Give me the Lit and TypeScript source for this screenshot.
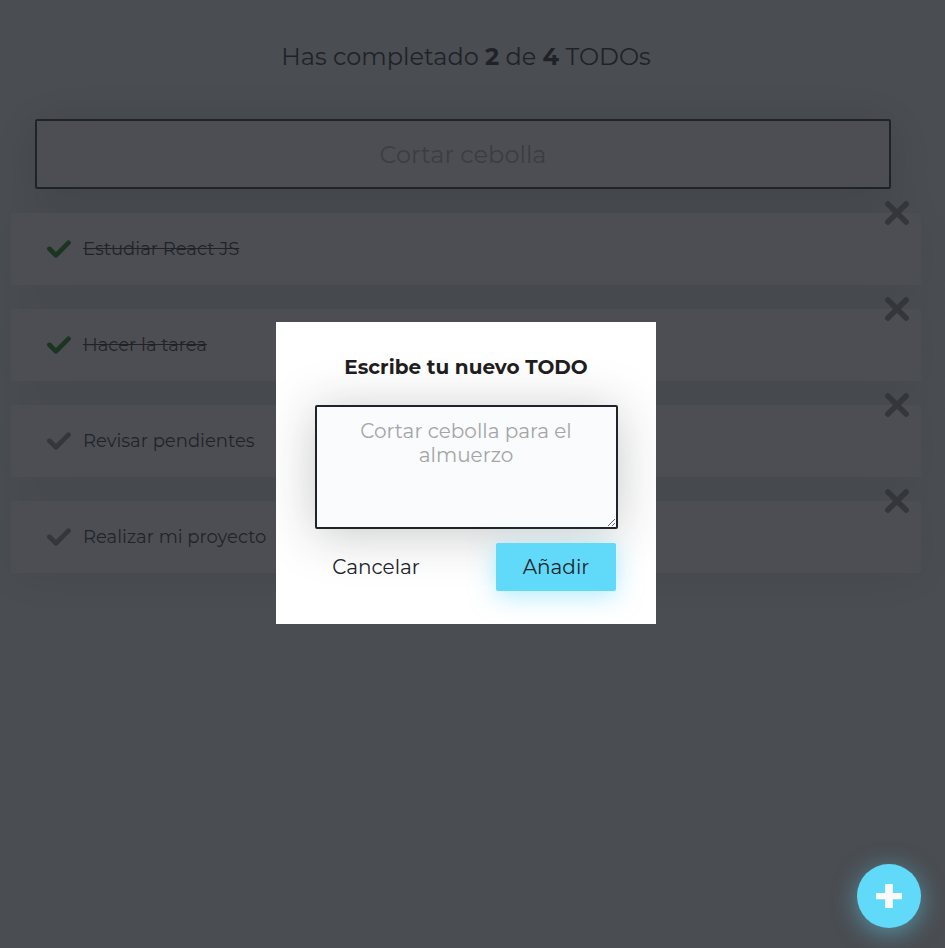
import { LitElement, html, css } from "lit";
import { customElement, property, state } from "lit/decorators.js";
import { classMap } from "lit/directives/class-map.js";

@customElement("todo-item")
class TodoItem extends LitElement {
  @property() text = "";
  @property({ type: Boolean }) completed = false;

  static styles = css`
    :host {
      display: flex;
      align-items: center;
      position: relative;
      box-sizing: border-box;
      height: 72px;
      padding-left: 36px;
      background: #fafafa;
      box-shadow: 0 5px 50px rgba(32, 35, 41, 0.15);
    }
    .check {
      width: 24px;
      height: 24px;
      fill: gray;
    }
    .check.done {
      fill: green;
    }
    .label {
      margin: 0 0 0 12px;
      font-size: 18px;
      line-height: 24px;
      color: #1e1e1f;
      white-space: nowrap;
    }
    .label.done {
      text-decoration: line-through;
    }
    .remove {
      position: absolute;
      top: -12px;
      right: 12px;
      width: 24px;
      height: 24px;
      stroke: gray;
      stroke-width: 5.6;
      stroke-linecap: round;
    }
  `;

  render() {
    return html`
      <svg class=${classMap({ check: true, done: this.completed })} viewBox="0 0 405.272 405.272">
        <path
          d="M393.401,124.425L179.603,338.225c-15.832,15.835-41.514,15.835-57.361,0L11.878,227.836c-15.838-15.835-15.838-41.52,0-57.358c15.841-15.841,41.521-15.841,57.355-0.006l81.698,81.699L336.037,67.064c15.841-15.841,41.523-15.829,57.358,0C409.23,82.902,409.23,108.578,393.401,124.425z"
        />
      </svg>
      <p class=${classMap({ label: true, done: this.completed })}>${this.text}</p>
      <svg class="remove" viewBox="0 0 24 24"><path d="M2.9 2.9L21.1 21.1M21.1 2.9L2.9 21.1" /></svg>
    `;
  }
}

@customElement("app-root")
class AppRoot extends LitElement {
  @state() todos = [
    { text: "Estudiar React JS", completed: true },
    { text: "Hacer la tarea", completed: true },
    { text: "Revisar pendientes", completed: false },
    { text: "Realizar mi proyecto", completed: false },
  ];

  static styles = css`
    :host {
      display: block;
      position: relative;
      box-sizing: border-box;
      width: 100%;
      height: 948px;
      padding: 0 24px 0 11px;
      overflow: hidden;
      background: #f0f5f3;
      font-family: Montserrat, Inter, sans-serif;
      color: #1e1e1f;
    }
    .counter {
      margin: 0;
      padding: 42px 0 47px;
      text-align: center;
      font-size: 24px;
      line-height: 30px;
      font-weight: 400;
    }
    .search {
      display: block;
      box-sizing: border-box;
      width: 856px;
      height: 70px;
      margin: 0 24px;
      border: 2px solid #202329;
      border-radius: 2px;
      background: #f9fbfc;
      box-shadow: 0 5px 50px rgba(32, 35, 41, 0.25);
      font: 400 24px Montserrat, Inter, sans-serif;
      text-align: center;
      outline: none;
    }
    .search::placeholder,
    .entry::placeholder {
      color: #a5a5a5;
    }
    .list {
      display: flex;
      flex-direction: column;
      gap: 24px;
      margin-top: 24px;
    }
    .overlay {
      position: absolute;
      inset: 0;
      z-index: 1;
      box-sizing: border-box;
      display: flex;
      justify-content: center;
      align-items: center;
      padding: 0 13px 2px 0;
      background: rgba(32, 35, 41, 0.8);
    }
    .modal {
      box-sizing: border-box;
      width: 380px;
      height: 302px;
      padding: 33px 38px 33px 39px;
      background: #fff;
      overflow: hidden;
    }
    .title {
      margin: 0 1px 26px 0;
      text-align: center;
      font-size: 20px;
      font-weight: 700;
      line-height: 24px;
    }
    .entry {
      display: block;
      box-sizing: border-box;
      width: 303px;
      height: 124px;
      margin: 0;
      padding: 12px 13px 12px 12px;
      border: 2px solid #202329;
      border-radius: 2px;
      background: #f9fbfc;
      box-shadow: 0 5px 50px rgba(32, 35, 41, 0.25);
      font: 400 20px/24px Montserrat, Inter, sans-serif;
      text-align: center;
      outline: none;
    }
    .actions {
      display: flex;
      justify-content: space-between;
      margin: 14px 2px 0 1px;
    }
    .btn {
      width: 120px;
      height: 48px;
      padding: 0;
      border: none;
      border-radius: 2px;
      background: transparent;
      color: #202329;
      font: 400 20px Montserrat, Inter, sans-serif;
    }
    .primary {
      background: #61dafa;
      box-shadow: 0 5px 25px rgba(97, 218, 250, 0.5);
    }
    .fab {
      position: absolute;
      right: 24px;
      bottom: 20px;
      z-index: 2;
      display: flex;
      justify-content: center;
      align-items: center;
      width: 64px;
      height: 64px;
      padding: 0;
      border: none;
      border-radius: 50%;
      background: #61dafa;
      box-shadow: 0 5px 25px rgba(97, 218, 250, 0.5);
    }
    .plus {
      width: 26px;
      height: 24px;
      fill: #fafafa;
    }
  `;

  render() {
    const done = this.todos.filter((t) => t.completed).length;
    return html`
      <h2 class="counter">Has completado <b>${done}</b> de <b>${this.todos.length}</b> TODOs</h2>
      <input class="search" placeholder="Cortar cebolla" />
      <div class="list">
        ${this.todos.map((t) => html`<todo-item .text=${t.text} .completed=${t.completed}></todo-item>`)}
      </div>
      <div class="overlay">
        <div class="modal">
          <div class="title">Escribe tu nuevo TODO</div>
          <textarea class="entry" placeholder="Cortar cebolla para el almuerzo"></textarea>
          <div class="actions">
            <button class="btn">Cancelar</button>
            <button class="btn primary">Añadir</button>
          </div>
        </div>
      </div>
      <button class="fab" aria-label="Añadir">
        <svg class="plus" viewBox="0 0 26 24"><path d="M9.2 0h7.6v9h9.2v6.2H16.8V24H9.2v-8.8H0V9h9.2z" /></svg>
      </button>
    `;
  }
}
